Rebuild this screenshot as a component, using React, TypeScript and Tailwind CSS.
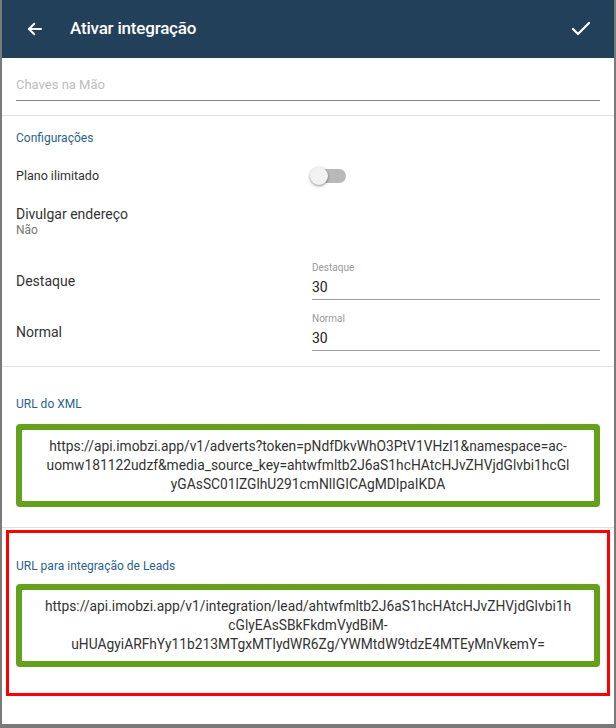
import React from "react";

const xmlUrl =
  "https://api.imobzi.app/v1/adverts?token=pNdfDkvWhO3PtV1VHzI1&namespace=ac-uomw181122udzf&media_source_key=ahtwfmltb2J6aS1hcHAtcHJvZHVjdGlvbi1hcGlyGAsSC01lZGlhU291cmNlIGICAgMDIpaIKDA";
const leadsUrl =
  "https://api.imobzi.app/v1/integration/lead/ahtwfmltb2J6aS1hcHAtcHJvZHVjdGlvbi1hcGlyEAsSBkFkdmVydBiM-uHUAgyiARFhYy11b213MTgxMTIydWR6Zg/YWMtdW9tdzE4MTEyMnVkemY=";

const UrlBox = ({ url }: { url: string }) => (
  <div className="rounded-[4px] border-[6px] border-[#64a01c] bg-white px-[22px] py-[7px] text-center text-[13.8px] leading-[19px] text-[#333] break-words">
    {url}
  </div>
);

const NumberField = ({ label, value }: { label: string; value: string }) => (
  <div className="flex-1 border-b border-[#9e9e9e] pb-[4px]">
    <div className="text-[10px] leading-[12px] text-[#9a9a9a]">{label}</div>
    <div className="mt-[5px] text-[14px] leading-[16px] text-[#222]">{value}</div>
  </div>
);

const App = () => {
  return (
    <div
      className="flex h-[728px] w-[616px] flex-col bg-[#7a7a7a] px-[2px] pb-[4px]"
      style={{ fontFamily: "Roboto, 'Liberation Sans', sans-serif" }}
    >
      <div className="flex flex-1 flex-col bg-white">
        {/* toolbar */}
        <div className="flex h-[58px] items-center bg-[#23405a] pl-[24px] pr-[21px] text-white">
          <svg width="18" height="18" viewBox="0 0 24 24" fill="none" stroke="white" strokeWidth="2.6" strokeLinecap="round" strokeLinejoin="round">
            <path d="M20 12H4" />
            <path d="M11 5l-7 7 7 7" />
          </svg>
          <h1 className="ml-[26px] flex-1 text-[17px] font-medium tracking-[-0.2px]">Ativar integração</h1>
          <svg width="24" height="24" viewBox="0 0 24 24" fill="none" stroke="white" strokeWidth="2.2" strokeLinecap="round" strokeLinejoin="round">
            <path d="M20 6 9 17l-5-5" />
          </svg>
        </div>

        {/* name field */}
        <div className="border-b border-[#e2e2e2] px-[14px] pt-[19px] pb-[14px]">
          <div className="border-b border-[#8a8a8a] pb-[7px] text-[13px] leading-[16px] text-[#bdbdbd]">
            Chaves na Mão
          </div>
        </div>

        {/* configuracoes */}
        <div className="border-b border-[#e2e2e2] px-[14px] pt-[15px] pb-[15px]">
          <div className="text-[12px] leading-[14px] text-[#2b5f8c]">Configurações</div>

          <div className="mt-[24px] flex items-center">
            <div className="w-[296px] text-[12.5px] leading-[14px] text-[#333]">Plano ilimitado</div>
            <div className="relative h-[14px] w-[34px] rounded-full bg-[#b9b9b9]">
              <div className="absolute top-[-2px] left-[-2px] h-[18px] w-[18px] rounded-full bg-[#f2f2f2] shadow-[0_1px_3px_rgba(0,0,0,0.45)]" />
            </div>
          </div>

          <div className="mt-[23px]">
            <div className="text-[14px] leading-[16px] text-[#333]">Divulgar endereço</div>
            <div className="mt-[1px] text-[12px] leading-[14px] text-[#777]">Não</div>
          </div>

          <div className="mt-[25px] flex items-center">
            <div className="w-[296px] text-[14px] leading-[16px] text-[#333]">Destaque</div>
            <NumberField label="Destaque" value="30" />
          </div>

          <div className="mt-[13px] flex items-center">
            <div className="w-[296px] text-[14px] leading-[16px] text-[#333]">Normal</div>
            <NumberField label="Normal" value="30" />
          </div>
        </div>

        {/* XML url */}
        <div className="border-b border-[#e2e2e2] px-[14px] pt-[30px] pb-[20px]">
          <div className="text-[12px] leading-[14px] text-[#2b5f8c]">URL do XML</div>
          <div className="mt-[13px]">
            <UrlBox url={xmlUrl} />
          </div>
        </div>

        {/* leads url, highlighted */}
        <div className="mx-[4px] mt-[2px] border-[3px] border-[#ff0000] px-[7px] pt-[26px] pb-[26px]">
          <div className="text-[12px] leading-[14px] text-[#2b5f8c]">URL para integração de Leads</div>
          <div className="mt-[11px]">
            <UrlBox url={leadsUrl} />
          </div>
        </div>
      </div>
    </div>
  );
};

export default App;
